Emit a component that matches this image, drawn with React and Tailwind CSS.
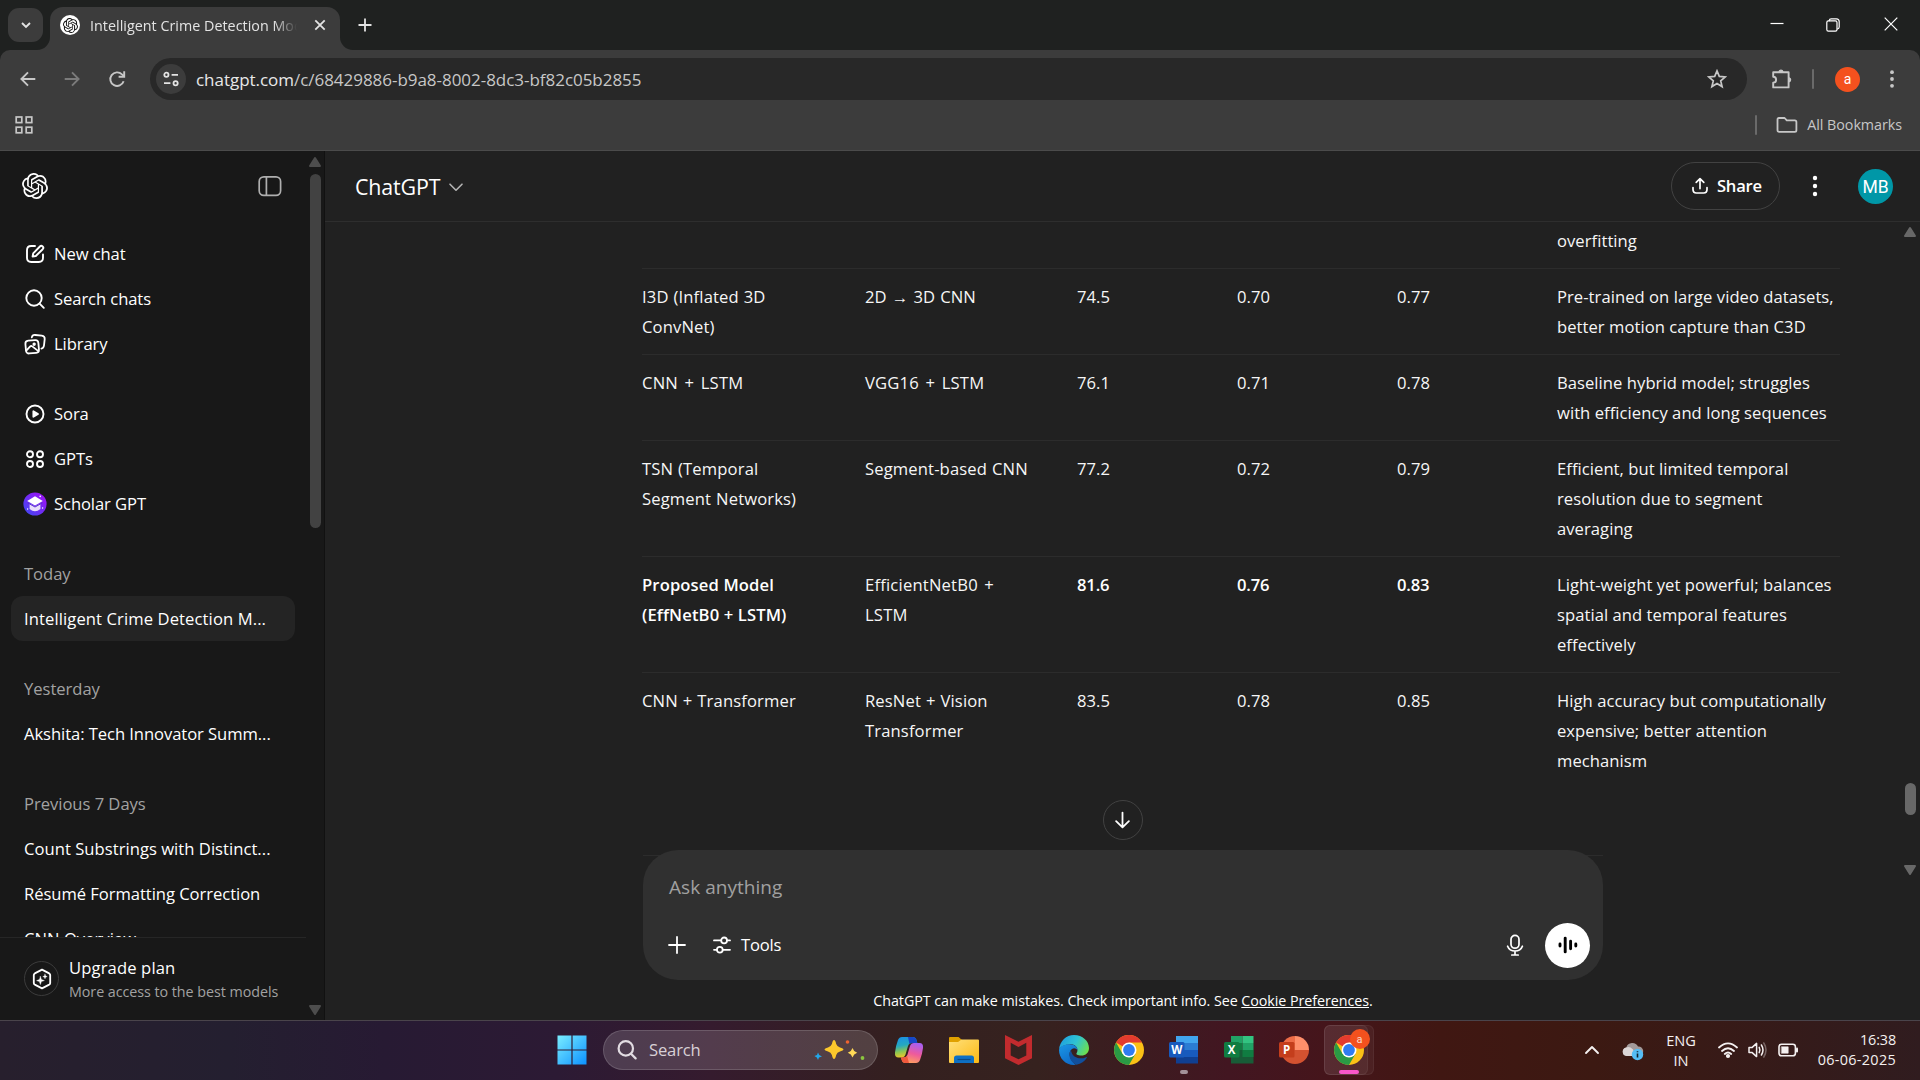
import React from "react";
import { SiOpenai } from "react-icons/si";

/* ---------- shared ---------- */

function Ico({ size = 24, box = 24, sw = 1.8, className = "", children }) {
  return (
    <svg
      width={size}
      height={size}
      viewBox={`0 0 ${box} ${box}`}
      fill="none"
      stroke="currentColor"
      strokeWidth={sw}
      strokeLinecap="round"
      strokeLinejoin="round"
      className={`block shrink-0 ${className}`}
    >
      {children}
    </svg>
  );
}

function Triangle({ down = false, className = "" }) {
  return (
    <svg width="14" height="12" viewBox="0 0 14 12" className={`block shrink-0 ${down ? "rotate-180" : ""} ${className}`}>
      <path d="M7 2 L12 10 H2 Z" fill="currentColor" stroke="currentColor" strokeWidth="2" strokeLinejoin="round" />
    </svg>
  );
}

/* ---------- browser chrome ---------- */

function TabStrip() {
  return (
    <div className="flex h-[50px] shrink-0 bg-[#1f2120] text-[#e3e3e3]">
      <button className="mt-2 ml-2 flex h-[34px] w-[35px] items-center justify-center rounded-[11px] bg-[#3c3c3c]">
        <Ico size={12} box={12} sw={1.9}>
          <path d="M2 4l4 4 4-4" strokeLinecap="butt" strokeLinejoin="miter" />
        </Ico>
      </button>
      <div className="relative mt-[7px] ml-[7px] flex h-[43px] w-[290px] items-center rounded-t-[13px] bg-[#3c3c3c] pb-[7px] pl-[10px]">
        <svg width="13" height="13" className="absolute bottom-0 -left-[13px]">
          <path d="M13 0 V13 H0 A13 13 0 0 0 13 0Z" fill="#3c3c3c" />
        </svg>
        <svg width="13" height="13" className="absolute -right-[13px] bottom-0">
          <path d="M0 0 V13 H13 A13 13 0 0 1 0 0Z" fill="#3c3c3c" />
        </svg>
        <div className="flex h-5 w-5 items-center justify-center rounded-full bg-white">
          <SiOpenai className="text-[#111]" size={15} />
        </div>
        <div className="ml-[10px] w-[209px] overflow-hidden pt-px text-[14.3px] tracking-[0.002em] whitespace-nowrap [mask-image:linear-gradient(to_right,black_88%,transparent_99%)]">
          Intelligent Crime Detection Model
        </div>
        <Ico size={14} box={14} sw={1.8} className="ml-[14px]">
          <path d="M2.3 2.3l9.4 9.4M11.7 2.3l-9.4 9.4" strokeLinecap="butt" />
        </Ico>
      </div>
      <Ico size={14} box={14} sw={1.8} className="mt-[18px] ml-[18px]">
        <path d="M7 .5v13M.5 7h13" strokeLinecap="butt" />
      </Ico>
      <div className="ml-auto flex h-[48px] items-center pr-[22px] text-white">
        <Ico size={14} box={14} sw={1.2}>
          <path d="M.5 6.5h13" strokeLinecap="butt" />
        </Ico>
        <Ico size={14} box={14} sw={1.2} className="mt-px ml-[42px]">
          <rect x=".8" y="2.8" width="10.2" height="10.4" rx="1.6" />
          <path d="M3.2 2.6 Q3.4 .8 5.2 .8 H10.4 Q13.2 .9 13.2 3.6 V9 Q13.1 10.7 11.4 11" />
        </Ico>
        <Ico size={14} box={14} sw={1.2} className="ml-[44px]">
          <path d="M.7 .7l12.6 12.6M13.3 .7L.7 13.3" strokeLinecap="butt" />
        </Ico>
      </div>
    </div>
  );
}

function Toolbar() {
  return (
    <div className="shrink-0 bg-[#1f2120]">
      <div className="h-[101px] rounded-t-[10px] border-b border-[#4b4b4b] bg-[#3c3c3c] text-[#c7c7c7]">
        <div className="flex h-[58px] items-center">
          <Ico size={16} box={16} sw={1.9} className="ml-[20px]">
            <path d="M15.3 8H1.6M8 1.3L1.4 8 8 14.7" strokeLinecap="butt" strokeLinejoin="miter" />
          </Ico>
          <Ico size={16} box={16} sw={1.9} className="ml-[28px] text-[#7b7b7b]">
            <path d="M.7 8h13.7M8 1.3L14.6 8 8 14.7" strokeLinecap="butt" strokeLinejoin="miter" />
          </Ico>
          <Ico size={18} box={18} sw={1.9} className="ml-[28px]">
            <path d="M15.6 11.2A6.8 6.8 0 1 1 14 4.4L16 6.3" strokeLinecap="butt" />
            <path d="M16.2 1.3V6.7H10.6" strokeLinecap="butt" strokeLinejoin="miter" />
          </Ico>
          <div className="ml-[24px] flex h-[42px] w-[1597px] items-center rounded-full bg-[#282828] pr-[20px] pl-[6px]">
            <div className="flex h-[30px] w-[30px] items-center justify-center rounded-full bg-[#3c3c3c] text-[#e3e3e3]">
              <Ico size={16} box={16} sw={1.8}>
                <circle cx="3.4" cy="3.8" r="2.1" />
                <path d="M8.6 3.8H15M1 12.2H7.4" strokeLinecap="butt" />
                <circle cx="12.6" cy="12.2" r="2.1" />
              </Ico>
            </div>
            <div className="ml-[10px] pt-px text-[17px] tracking-[-0.002em] whitespace-nowrap text-[#c7c7c7]">
              <span className="text-[#e8e8e8]">chatgpt.com</span>/c/68429886-b9a8-8002-8dc3-bf82c05b2855
            </div>
            <Ico size={20} box={20} sw={1.7} className="ml-auto">
              <path
                d="M10 1.9l2.3 5.5 6 .5-4.6 3.9 1.4 5.8L10 14.5l-5.1 3.1 1.4-5.8L1.7 7.9l6-.5z"
                strokeLinejoin="miter"
              />
            </Ico>
          </div>
          <Ico size={22} box={22} sw={1.9} className="ml-[24px]">
            <path d="M2.2 4.2H17.6V19.4H2.2V14.6A2.9 2.9 0 0 0 2.2 8.8Z" />
            <path d="M8 3.6A2.1 2.1 0 0 1 12 3.6ZM18.2 9.8A2.1 2.1 0 0 1 18.2 13.8Z" fill="currentColor" strokeWidth="1.2" />
          </Ico>
          <div className="ml-[19px] h-[20px] w-[2px] rounded bg-[#6a6a6a]" />
          <div className="ml-[21px] flex h-[25px] w-[25px] items-center justify-center rounded-full bg-[#f4511e] font-[Roboto] text-[14px] leading-none text-white">
            a
          </div>
          <Ico size={18} box={18} className="ml-[23px]">
            <g fill="currentColor" stroke="none">
              <circle cx="9" cy="2.2" r="1.9" />
              <circle cx="9" cy="9" r="1.9" />
              <circle cx="9" cy="15.8" r="1.9" />
            </g>
          </Ico>
        </div>
        <div className="flex h-[34px] items-center pr-[18px] pl-[15px]">
          <Ico size={18} box={18} sw={1.7}>
            <g strokeLinejoin="miter">
              <rect x="1.2" y="1" width="5.6" height="5.6" />
              <rect x="11.2" y="1" width="5.6" height="5.6" />
              <rect x="1.2" y="11.2" width="5.6" height="5.6" />
              <rect x="11.2" y="11.2" width="5.6" height="5.6" />
            </g>
          </Ico>
          <div className="ml-auto h-[20px] w-[2px] rounded bg-[#6a6a6a]" />
          <Ico size={22} box={22} sw={1.8} className="ml-[19px]">
            <path d="M1.5 16.2V5.4Q1.5 4 2.900 4H8.600L10.800 6.400H18.800Q20.400 6.400 20.400 8V16.200Q20.400 17.800 18.800 17.800H3.100Q1.500 17.800 1.500 16.200Z" />
          </Ico>
          <div className="ml-[9px] text-[14.3px] tracking-[-0.003em] whitespace-nowrap">All Bookmarks</div>
        </div>
      </div>
    </div>
  );
}

/* ---------- sidebar ---------- */

const icons = {
  newChat: (
    <Ico sw={1.9}>
      <path d="M12 4H8.2Q4 4 4 8.2V15.8Q4 20 8.2 20H15.8Q20 20 20 15.8V12.4" />
      <path d="M9.6 14.5L10.2 11.4 16.9 4.5A1.9 1.9 0 0 1 19.7 7.2L12.8 14Z" />
    </Ico>
  ),
  search: (
    <Ico sw={1.9}>
      <circle cx="11" cy="11" r="7.7" />
      <path d="M16.6 16.6L20.8 20.8" />
    </Ico>
  ),
  library: (
    <Ico sw={1.8}>
      <g transform="rotate(-5 9 15)">
        <rect x="2.7" y="8.4" width="13" height="12.8" rx="3" />
        <path d="M3 18l4-3.6q1.2-1 2.3 0l5.4 5" />
        <circle cx="11.4" cy="12.4" r="0.8" fill="currentColor" />
      </g>
      <path d="M8.8 5.4Q9.4 2.7 12.2 3L18.8 3.7Q22 4.2 21.7 7.2L21 13.4Q20.6 16.3 18.4 16.6" />
    </Ico>
  ),
  sora: (
    <Ico sw={1.9}>
      <circle cx="12" cy="12" r="8.5" />
      <path d="M10.4 9.3V14.7L15 12Z" fill="currentColor" />
    </Ico>
  ),
  gpts: (
    <Ico sw={1.9}>
      <circle cx="7" cy="7.2" r="3" />
      <circle cx="17" cy="7.2" r="3" />
      <circle cx="7" cy="17" r="3" />
      <circle cx="17" cy="17" r="3" />
    </Ico>
  ),
  scholar: (
    <svg width="24" height="24" viewBox="0 0 24 24" className="block shrink-0">
      <defs>
        <linearGradient id="sch" x1="1" y1="0" x2="0" y2="1">
          <stop offset="0" stopColor="#a80bf5" />
          <stop offset="1" stopColor="#3a4bf2" />
        </linearGradient>
      </defs>
      <circle cx="12" cy="12" r="11.6" fill="url(#sch)" />
      <path d="M6.6 11.4L12 14.6 17.4 11.4V17Q12 21.6 6.6 17Z" fill="#e9defb" />
      <path d="M4.2 9L12 4.2 19.8 9 12 13.6Z" fill="#fff" />
      <path d="M4.6 10.8L12 15 19.4 10.8" fill="none" stroke="#5b2fd0" strokeWidth="1" />
      <circle cx="17.2" cy="4.4" r="0.8" fill="#fff" />
      <circle cx="4.6" cy="17" r="0.7" fill="#fff" />
      <circle cx="19.6" cy="16" r="0.7" fill="#fff" />
    </svg>
  ),
};

function NavItem({ icon, children }) {
  return (
    <div className="flex h-[45px] items-center pl-[23px]">
      {icons[icon]}
      <span className="ml-[7px] pt-[2px] tracking-[-0.005em]">{children}</span>
    </div>
  );
}

function Chat({ active, children }) {
  return (
    <div
      className={`mx-[11px] flex h-[45px] shrink-0 items-center rounded-[12px] pt-[2px] pl-[13px] tracking-[0.002em] whitespace-nowrap ${
        active ? "bg-[#242424]" : ""
      }`}
    >
      {children}
    </div>
  );
}

function Heading({ children }) {
  return <div className="mt-[25px] flex h-[45px] shrink-0 items-center pt-[2px] pl-[24px] text-[#a2a2a2]">{children}</div>;
}

function Sidebar() {
  return (
    <aside className="flex w-[325px] shrink-0 border-r border-[#111] bg-[#181818] text-[16.6px] tracking-[-0.002em] text-white">
      <div className="flex w-[306px] flex-col">
        <div className="flex h-[70px] shrink-0 items-center justify-between pr-[24px] pl-[22px]">
          <SiOpenai size={26} />
          <Ico sw={1.7} className="text-[#afafaf]">
            <rect x="1.2" y="2.8" width="21.4" height="18.6" rx="4.6" />
            <path d="M8.4 3V21" />
          </Ico>
        </div>
        <div className="min-h-0 flex-1 overflow-hidden pt-[10px]">
          <NavItem icon="newChat">New chat</NavItem>
          <NavItem icon="search">Search chats</NavItem>
          <NavItem icon="library">Library</NavItem>
          <div className="h-[25px]" />
          <NavItem icon="sora">Sora</NavItem>
          <NavItem icon="gpts">GPTs</NavItem>
          <NavItem icon="scholar">Scholar GPT</NavItem>
          <Heading>Today</Heading>
          <Chat active>
            <span className="tracking-[0.006em]">Intelligent Crime Detection M...</span>
          </Chat>
          <Heading>Yesterday</Heading>
          <Chat>
            <span className="tracking-[-0.004em]">Akshita: Tech Innovator Summ...</span>
          </Chat>
          <Heading>Previous 7 Days</Heading>
          <Chat>Count Substrings with Distinct...</Chat>
          <Chat>
            <span className="tracking-[-0.003em]">Résumé Formatting Correction</span>
          </Chat>
          <Chat>CNN Overview</Chat>
        </div>
        <div className="flex h-[83px] shrink-0 items-center border-t border-[#262626] pl-[24px]">
          <div className="-mt-px flex h-[35px] w-[35px] items-center justify-center rounded-full border border-[#3c3c3c]">
            <Ico size={22} box={22} sw={1.8}>
              <path d="M11 1.6L18.2 5.4Q19.2 6 19.2 7.1V14.9Q19.2 16 18.2 16.6L11 20.4 3.8 16.6Q2.8 16 2.8 14.9V7.1Q2.8 6 3.8 5.4Z" />
              <path d="M9.4 8.4L10.4 11.6 13.4 12.6 10.4 13.6 9.4 16.6 8.4 13.6 5.6 12.6 8.4 11.6Z" fill="currentColor" strokeWidth=".4" />
              <path d="M14 6.2L14.6 8 16.2 8.6 14.6 9.2 14 10.8 13.4 9.2 11.8 8.6 13.4 8Z" fill="currentColor" strokeWidth=".4" />
            </Ico>
          </div>
          <div className="ml-[10px] whitespace-nowrap">
            <div className="h-[24px] leading-[24px] tracking-[0.008em]">Upgrade plan</div>
            <div className="h-[22px] text-[14.3px] leading-[24px] tracking-[-0.003em] text-[#a2a2a2]">
              More access to the best models
            </div>
          </div>
        </div>
      </div>
      <div className="flex w-[18px] flex-col items-center pt-[5px] pb-[4px] text-[#4d4d4d]">
        <Triangle />
        <div className="mt-[6px] h-[354px] w-[11px] rounded-full bg-[#424242]" />
        <Triangle down className="mt-auto" />
      </div>
    </aside>
  );
}

/* ---------- conversation ---------- */

const rows = [
  { c: ["I3D (Inflated 3D\nConvNet)", "2D → 3D CNN", "74.5", "0.70", "0.77", "Pre-trained on large video datasets,\nbetter motion capture than C3D"] },
  { c: ["CNN + LSTM", "VGG16 + LSTM", "76.1", "0.71", "0.78", "Baseline hybrid model; struggles\nwith efficiency and long sequences"] },
  { c: ["TSN (Temporal\nSegment Networks)", "Segment-based CNN", "77.2", "0.72", "0.79", "Efficient, but limited temporal\nresolution due to segment\naveraging"] },
  {
    bold: true,
    c: ["Proposed Model\n(EffNetB0 + LSTM)", "EfficientNetB0 +\nLSTM", "81.6", "0.76", "0.83", "Light-weight yet powerful; balances\nspatial and temporal features\neffectively"],
  },
  { c: ["CNN + Transformer", "ResNet + Vision\nTransformer", "83.5", "0.78", "0.85", "High accuracy but computationally\nexpensive; better attention\nmechanism"] },
];

const boldCols = [0, 2, 3, 4];

function cellClass(bold, text, col) {
  if (bold && boldCols.includes(col)) {
    return col === 0 ? "font-semibold tracking-[0.008em] text-white" : "font-semibold tracking-[-0.01em] text-white";
  }
  if (col === 5) return "tracking-[0.003em]";
  if (text.includes("LSTM")) return "tracking-[0.012em] [word-spacing:2px]";
  if (col < 2) return "tracking-[0.008em] [word-spacing:0.5px]";
  return "tracking-[0.004em]";
}

function ResultsTable() {
  return (
    <div className="ml-[317px] w-[1198px] text-[16.6px] leading-[30px] whitespace-pre text-[#f6f6f6]">
      <div className="flex h-[47px] justify-end border-b border-[#2c2c2c]">
        <div className="w-[283px] pt-[4px] tracking-[0.003em]">overfitting</div>
      </div>
      {rows.map((r, i) => (
        <div
          key={i}
          className={`grid grid-cols-[223px_212px_160px_160px_160px_283px] pt-[13px] pb-[12px] ${
            i < rows.length - 1 ? "border-b border-[#2c2c2c]" : ""
          }`}
        >
          {r.c.map((t, j) => (
            <div key={j} className={cellClass(r.bold, t, j)}>
              {t}
            </div>
          ))}
        </div>
      ))}
    </div>
  );
}

function ChatHeader() {
  return (
    <header className="flex h-[71px] shrink-0 items-center border-b border-[#2e2e2e] pr-[27px] pl-[30px] text-white">
      <span className="pt-[2px] text-[21.4px] tracking-[-0.006em]">ChatGPT</span>
      <Ico size={16} box={16} sw={1.6} className="mt-px ml-[8px] text-[#b4b4b4]">
        <path d="M2 5.2L8 11.2 14 5.2" />
      </Ico>
      <div className="ml-auto flex h-[48px] w-[109px] items-center rounded-full border border-[#424242] pl-[18px]">
        <Ico size={20} box={20} sw={1.7}>
          <path d="M10 12.6V3M6.2 6.4L10 2.7 13.8 6.4M3 11.6V13.6Q3 17 6.4 17H13.6Q17 17 17 13.6V11.6" />
        </Ico>
        <span className="ml-[7px] pt-px text-[16.6px] font-semibold tracking-[-0.015em]">Share</span>
      </div>
      <Ico size={22} box={22} className="ml-[24px]">
        <g fill="currentColor" stroke="none">
          <circle cx="11" cy="3" r="2.2" />
          <circle cx="11" cy="11" r="2.2" />
          <circle cx="11" cy="19" r="2.2" />
        </g>
      </Ico>
      <div className="ml-[32px] flex h-[35px] w-[35px] items-center justify-center rounded-full bg-[#0097a7] pt-[2px] font-[Roboto] text-[17.5px]">
        MB
      </div>
    </header>
  );
}

function Composer() {
  return (
    <div className="ml-[318px] w-[960px]">
      <div className="relative mx-auto mt-[-20px] flex h-[40px] w-[40px] items-center justify-center rounded-full border border-[#424242] bg-[#212121] text-white">
        <Ico size={20} box={20} sw={1.8}>
          <path d="M9.500 2.600V17.200M3.100 11.200L9.500 17.400 15.900 11.200" />
        </Ico>
      </div>
      <div className="relative mt-[10px]">
        <div className="absolute inset-x-0 top-[5px] h-px bg-[#2c2c2c]" />
        <div className="relative flex h-[130px] flex-col rounded-[35px] bg-[#303030] text-white">
          <div className="mt-[22px] ml-[26px] h-[30px] text-[19px] leading-[31px] tracking-[0.002em] text-[#a0a0a0]">
            Ask anything
          </div>
          <div className="mt-[20px] flex h-[45px] items-center pr-[13px] pl-[24px]">
            <Ico size={20} box={20} sw={1.8}>
              <path d="M10 2V18M2 10H18" />
            </Ico>
            <Ico size={20} box={20} sw={1.8} className="ml-[25px]">
              <path d="M2 5.4H9M15.2 5.4H18M2 14.8H4.8M11 14.8H18" />
              <circle cx="12.1" cy="5.4" r="2.9" />
              <circle cx="7.8" cy="14.8" r="2.9" />
            </Ico>
            <span className="ml-[9px] pt-[2px] text-[16.6px] tracking-[-0.012em]">Tools</span>
            <Ico size={24} box={24} sw={1.7} className="ml-auto">
              <rect x="8" y="2.4" width="8" height="12.8" rx="4" />
              <path d="M4.6 13.2Q6.4 18 12 18 17.6 18 19.4 13.2M12 18V21.8M8.8 22H15.2" />
            </Ico>
            <div className="mt-px ml-[18px] flex h-[45px] w-[45px] items-center justify-center rounded-full bg-white text-black">
              <Ico size={20} box={20} sw={2.9}>
                <path d="M2 9V11M7.2 3.1V16.9M12.6 6.2V13.8M17.8 9V11" />
              </Ico>
            </div>
          </div>
        </div>
      </div>
      <div className="flex h-[40px] items-center justify-center pt-[2px] text-[14.3px] tracking-[-0.004em] whitespace-pre text-white">
        ChatGPT can make mistakes. Check important info. See <span className="underline">Cookie Preferences</span>.
      </div>
    </div>
  );
}

function Main() {
  return (
    <main className="flex flex-1 flex-col bg-[#212121]">
      <ChatHeader />
      <div className="flex h-[598px] shrink-0">
        <div className="flex-1">
          <ResultsTable />
        </div>
        <div className="flex w-[20px] flex-col items-center pt-[4px] text-[#686868]">
          <Triangle />
          <div className="mt-[545px] h-[32px] w-[11px] shrink-0 rounded-full bg-[#686868]" />
          <Triangle down className="mt-[49px]" />
        </div>
      </div>
      <Composer />
    </main>
  );
}

/* ---------- taskbar ---------- */

function Windows() {
  return (
    <svg width="30" height="30" viewBox="0 0 30 30" className="block">
      <defs>
        <linearGradient id="win" gradientUnits="userSpaceOnUse" x1="0" y1="0" x2="30" y2="30">
          <stop offset="0" stopColor="#7cefff" />
          <stop offset="1" stopColor="#0a8fff" />
        </linearGradient>
      </defs>
      <path d="M.5.5H14.4V14.4H.5ZM15.6.5H29.5V14.4H15.6ZM.5 15.6H14.4V29.5H.5ZM15.6 15.6H29.5V29.5H15.6Z" fill="url(#win)" />
    </svg>
  );
}

function Sparkles() {
  return (
    <svg width="52" height="22" viewBox="0 0 52 22" className="block">
      <path d="M20 1Q21.4 1 22.2 5 23 7.6 26 8.4 29.5 9.2 29.5 10.5 29.5 11.7 26 12.5 23 13.4 22.2 16 21.4 20 20 20 18.7 20 17.9 16 17 13.4 14 12.5 10.5 11.7 10.5 10.5 10.5 9.2 14 8.4 17 7.6 17.9 5 18.7 1 20 1Z" fill="#fcc82c" />
      <path d="M38.5 9L40.2 12 43.2 13.7 40.2 15.4 38.5 18.5 36.8 15.4 33.8 13.7 36.8 12Z" fill="#ffd957" />
      <path d="M4 13.5L5.2 16 8 17.4 5 18.5 4 21 2.8 18.5 .4 17 3 16Z" fill="#22a7ea" />
      <circle cx="33.5" cy="3" r="1.8" fill="#ef6430" />
      <circle cx="48.5" cy="19" r="1.9" fill="#8bc53f" />
    </svg>
  );
}

function Copilot() {
  return (
    <svg width="30" height="28" viewBox="0 0 30 28" className="block">
      <defs>
        <linearGradient id="cpa" x1="0" y1="0" x2="0.2" y2="1">
          <stop offset="0" stopColor="#1a8fe8" />
          <stop offset=".45" stopColor="#25a8c0" />
          <stop offset=".75" stopColor="#8fc750" />
          <stop offset="1" stopColor="#e8c62c" />
        </linearGradient>
        <linearGradient id="cpb" x1="0.6" y1="0" x2="0.3" y2="1">
          <stop offset="0" stopColor="#a95ff0" />
          <stop offset=".5" stopColor="#ee5a9c" />
          <stop offset="1" stopColor="#ffa35c" />
        </linearGradient>
      </defs>
      <path d="M8 1H18.5Q21.6 1 22.5 4L23.3 7H18Q15 7 14 10L11.5 18.5Q10.5 21.5 7.5 21.5H4.5Q.5 21.5 1 16.5Q1.8 9.6 4 4Q5.2 1 8 1Z" fill="url(#cpa)" />
      <path d="M14 1H18.5Q21.6 1 22.5 4L23.3 7H18Q16.3 7 15.4 8Z" fill="#1746c8" />
      <path d="M22 27H11.5Q8.4 27 7.7 24L7 21.5H9.5Q12.5 21.5 13.5 18.5L16 10Q17 7 20 7H25.5Q29.5 7 29 12Q28.2 18.5 26 24Q24.8 27 22 27Z" fill="url(#cpb)" />
      <path d="M7 21.5H9.5Q12 21.5 13 19.5L15 27H11.5Q8.4 27 7.7 24Z" fill="#f0583c" />
    </svg>
  );
}

function Explorer() {
  return (
    <svg width="30" height="28" viewBox="0 0 30 28" className="block">
      <defs>
        <linearGradient id="exf" x1="0" y1="0" x2="1" y2="1">
          <stop offset="0" stopColor="#ffe07a" />
          <stop offset="1" stopColor="#fcb914" />
        </linearGradient>
      </defs>
      <path d="M0 2Q0 1 1 1H9.5L13 4V8H0Z" fill="#e0a100" />
      <path d="M0 6H9L12.5 3.6H29Q30 3.6 30 4.6V26Q30 27 29 27H1Q0 27 0 26Z" fill="url(#exf)" />
      <path d="M5 27V22Q5 19.5 7.5 19.5H22.5Q25 19.5 25 22V27Z" fill="#0e70c4" />
      <path d="M8.5 23.5H21.5" stroke="#0a4a86" strokeWidth="1.2" />
    </svg>
  );
}

function McAfee() {
  return (
    <svg width="27" height="30" viewBox="0 0 27 30" className="block">
      <path
        fillRule="evenodd"
        d="M0 0L13.5 6.8 27 0V23.2L13.5 30 0 23.2ZM5.7 7.8V20.4L13.5 24.2 21.3 20.4V7.8L13.5 12Z"
        fill="#c22b2e"
      />
    </svg>
  );
}

function Edge() {
  return (
    <svg width="30" height="30" viewBox="0 0 30 30" className="block">
      <defs>
        <linearGradient id="edt" x1="0" y1="0.3" x2="1" y2="0.7">
          <stop offset="0" stopColor="#1f9fe0" />
          <stop offset=".5" stopColor="#2fc3d3" />
          <stop offset="1" stopColor="#6fe04a" />
        </linearGradient>
        <linearGradient id="edb" x1="0" y1="0" x2="0.5" y2="1">
          <stop offset="0" stopColor="#1a97e6" />
          <stop offset="1" stopColor="#0f6cc8" />
        </linearGradient>
      </defs>
      <path d="M0 14.5C.8 6 7.3 0 15 0 23.6 0 30 6 30 13 30 17.6 26.6 20.6 22.4 20.6 18.6 20.6 16.8 19.3 17.6 18 19.6 15.5 18.5 9.2 11.5 9.2 5.5 9.2 1.4 12 0 14.5Z" fill="url(#edt)" />
      <path d="M0 15C.6 11.5 5 9.2 10.5 9.2 15.5 9.2 18.8 12.2 18.6 15.3 17.4 13.4 15 12.6 13 14 8.5 17 10.5 25.5 17 29.8 7.6 31 0 24 0 15Z" fill="url(#edb)" />
      <path d="M12 15C8.5 19.5 11 27.5 17.5 29.7 22 29 25.8 26.3 27.8 22.8 28.1 22.2 27.6 21.9 27 22.2 20 25.3 12.6 22 12 15Z" fill="#114f9c" />
    </svg>
  );
}

function Chrome() {
  return (
    <svg width="30" height="30" viewBox="0 0 30 30" className="block">
      <circle cx="15" cy="15" r="15" fill="#fbc116" />
      <path d="M15 15L2 7.5A15 15 0 0 1 28 7.5H15Z" fill="#e33b2e" />
      <path d="M2.01 7.5A15 15 0 0 0 15 30L21.5 18.75 8.5 18.75Z" fill="#2a9a45" />
      <circle cx="15" cy="15" r="7.5" fill="#fff" />
      <circle cx="15" cy="15" r="5.9" fill="#2f7cf0" />
    </svg>
  );
}

function OfficeBadge({ letter, fill }) {
  return (
    <>
      <rect x="0" y="7" width="15.5" height="15.5" rx="1.5" fill={fill} />
      <text x="7.7" y="18.8" textAnchor="middle" fontSize="11.5" fontWeight="700" fontFamily="Open Sans, sans-serif" fill="#fff">
        {letter}
      </text>
    </>
  );
}

function Word() {
  return (
    <svg width="30" height="30" viewBox="0 0 30 30" className="block">
      <path d="M7 1H29V8H7Z" fill="#41a5ee" />
      <path d="M7 8H29V15H7Z" fill="#2b7cd3" />
      <path d="M7 15H29V22H7Z" fill="#185abd" />
      <path d="M7 22H29V28.5H7Z" fill="#103f91" />
      <OfficeBadge letter="W" fill="#185abd" />
    </svg>
  );
}

function Excel() {
  return (
    <svg width="30" height="30" viewBox="0 0 30 30" className="block">
      <path d="M7 1H18.5V8H7Z" fill="#21a366" />
      <path d="M18.5 1H29.5V8H18.5Z" fill="#33c481" />
      <path d="M7 8H18.5V15H7Z" fill="#107c41" />
      <path d="M18.5 8H29.5V15H18.5Z" fill="#21a366" />
      <path d="M7 15H29.5V28.5H7Z" fill="#185c37" />
      <path d="M18.5 15H29.5V22H18.5Z" fill="#107c41" />
      <OfficeBadge letter="X" fill="#107c41" />
    </svg>
  );
}

function PowerPoint() {
  return (
    <svg width="30" height="30" viewBox="0 0 30 30" className="block">
      <path d="M16 1A14 14 0 0 0 2 15H16Z" fill="#ed6c47" />
      <path d="M16 1A14 14 0 0 1 30 15H16Z" fill="#ff8f6b" />
      <path d="M2 15A14 14 0 0 0 30 15Z" fill="#d35230" />
      <OfficeBadge letter="P" fill="#c43e1c" />
    </svg>
  );
}

function Slot({ children }) {
  return <div className="relative flex h-[60px] w-[55px] shrink-0 items-center justify-center">{children}</div>;
}

function Taskbar() {
  return (
    <footer className="flex h-[60px] shrink-0 items-center border-t border-[#4a444b] bg-[linear-gradient(90deg,#271f2d_0%,#241f30_12%,#271a33_20%,#2c1a34_29%,#351b2e_37%,#34201f_47%,#36221f_54%,#421621_64%,#45151b_69%,#401712_75%,#3c1912_83%,#301c1f_100%)] pb-px text-[#f4f0f0]">
      <div className="ml-[557px]">
        <Windows />
      </div>
      <div className="ml-[16px] flex h-[40px] w-[275px] items-center rounded-full border border-white/15 bg-white/15 pr-[11px] pl-[13px]">
        <Ico size={20} box={20} sw={2.2} className="text-[#e2dce2]">
          <circle cx="8.8" cy="8.4" r="7.2" />
          <path d="M14 13.8L18.6 18.4" />
        </Ico>
        <span className="ml-[12px] text-[16.6px] tracking-[-0.01em] text-[#d8d0d6]">Search</span>
        <div className="ml-auto">
          <Sparkles />
        </div>
      </div>
      <div className="ml-[3px] flex">
        <Slot><Copilot /></Slot>
        <Slot><Explorer /></Slot>
        <Slot><McAfee /></Slot>
        <Slot><Edge /></Slot>
        <Slot><Chrome /></Slot>
        <Slot>
          <Word />
          <div className="absolute bottom-[6px] left-[24px] h-[4px] w-[8px] rounded-full bg-[#a39299]" />
        </Slot>
        <Slot><Excel /></Slot>
        <Slot><PowerPoint /></Slot>
        <Slot>
          <div className="absolute top-[5px] left-[3px] h-[50px] w-[50px] rounded-[6px] border border-white/5 bg-white/5" />
          <div className="absolute top-[5px] left-[3px] h-[50px] w-[44px] rounded-[6px] border border-white/5 bg-white/5" />
          <div className="relative">
            <Chrome />
            <div className="absolute -top-[6px] left-[16px] flex h-[20px] w-[20px] items-center justify-center rounded-full bg-[#f4511e] font-[Roboto] text-[11px] leading-none text-[#fbd9cc]">
              a
            </div>
          </div>
          <div className="absolute bottom-[6px] left-[18px] h-[4px] w-[20px] rounded-full bg-[#f957c9]" />
        </Slot>
      </div>
      <div className="ml-auto flex items-center pr-[24px]">
        <Ico size={16} box={16} sw={1.9}>
          <path d="M2 11L8 5 14 11" />
        </Ico>
        <svg width="22" height="20" viewBox="0 0 22 20" className="mt-[2px] ml-[22px] block">
          <path d="M4.5 15A4.3 4.3 0 0 1 4.3 6.5 6.3 6.3 0 0 1 16 5.6 4.6 4.6 0 0 1 17 15Z" fill="#a39a9a" />
          <path d="M4.5 15A4.3 4.3 0 0 1 4.3 6.5Q7.5 5 11 8.5L14 15Z" fill="#dcd6d6" />
          <circle cx="15.5" cy="13.5" r="5.7" fill="#55bdf5" />
          <path d="M15.5 12.6V16.6M15.5 10.2V11.2" stroke="#12222c" strokeWidth="1.6" />
        </svg>
        <div className="ml-[19px] w-[36px] text-center text-[14.6px] leading-[20px]">
          ENG
          <br />
          IN
        </div>
        <Ico size={20} box={20} sw={1.8} className="ml-[19px]">
          <path d="M1 7.5Q10-.8 19 7.5M4 11Q10 5.4 16 11M6.8 14Q10 11 13.2 14" />
          <circle cx="10" cy="16" r="1.2" fill="currentColor" />
        </Ico>
        <Ico size={20} box={20} sw={1.5} className="ml-[10px]">
          <path d="M1 7.4H4.2L8.6 3.4V16.6L4.2 12.6H1Z" />
          <path d="M11.2 7.4Q12.6 10 11.2 12.6M13.4 5Q16.6 10 13.4 15" />
          <path d="M15.8 3Q20.2 10 15.8 17" opacity=".35" />
        </Ico>
        <Ico size={20} box={20} sw={1.6} className="ml-[10px]">
          <rect x="1" y="4.2" width="16.4" height="11.6" rx="2.6" />
          <rect x="3.6" y="6.8" width="6.6" height="6.4" fill="currentColor" strokeWidth=".6" />
          <path d="M19 8.6V11.4" strokeWidth="2" />
        </Ico>
        <div className="ml-[18px] w-[80px] text-right text-[14.4px] leading-[20px] whitespace-nowrap">
          <div className="tracking-[-0.01em]">16:38</div>
          <div className="tracking-[0.022em]">06-06-2025</div>
        </div>
      </div>
    </footer>
  );
}

export default function App() {
  return (
    <div className="flex h-[1080px] w-[1920px] flex-col overflow-hidden bg-[#212121] font-['Open_Sans','Noto_Sans',sans-serif]">
      <TabStrip />
      <Toolbar />
      <div className="flex h-[869px] shrink-0">
        <Sidebar />
        <Main />
      </div>
      <Taskbar />
    </div>
  );
}
